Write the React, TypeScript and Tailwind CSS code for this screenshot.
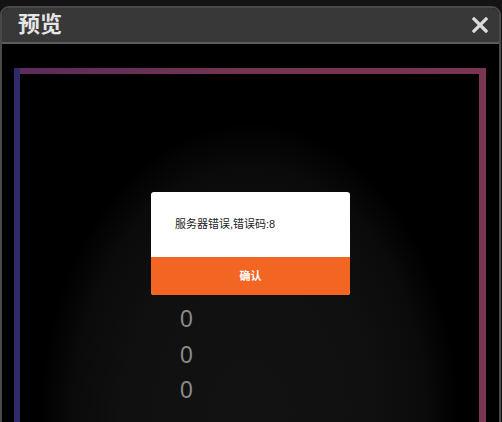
export default function App() {
  const zeros = ["0", "0", "0"];

  return (
    <div
      className="h-[422px] w-[502px] overflow-hidden bg-[#161314] pt-[6px]"
      style={{ fontFamily: '"Liberation Sans", "Noto Sans CJK SC", sans-serif' }}
    >
      {/* window */}
      <div className="flex h-[416px] w-[501px] flex-col overflow-hidden rounded-t-[9px] border-2 border-b-0 border-[#4a4a4a] bg-black">
        {/* header */}
        <div className="flex h-[36px] shrink-0 items-center justify-between border-b-2 border-[#5c5c5c] bg-[#383838] pl-[16px] pr-[10px]">
          <span className="text-[22px] font-bold leading-none text-[#e6e6e6]">预览</span>
          <svg width="16" height="16" viewBox="0 0 16 16" className="mr-[1px]">
            <path d="M2 2 L14 14 M14 2 L2 14" stroke="#dcdcdc" strokeWidth="3.2" strokeLinecap="square" />
          </svg>
        </div>

        {/* body */}
        <div className="flex-1 bg-black pl-[12px] pr-[13px] pt-[24px]">
          <div className="h-full border-l-[6px] border-[#2f2a6a] bg-[linear-gradient(to_right,#5b2c5c,#743452_45%,#7a3552_100%)] pr-[7px] pt-[6px]">
            <div className="relative h-full bg-[radial-gradient(ellipse_210px_300px_at_50%_100%,#121212_0%,#101010_60%,#0a0a0a_85%,#000_100%)] pl-[160px] pt-[228px]">
              {zeros.map((z, i) => (
                <div key={i} className="text-[23px] leading-[35.5px] text-[#8a8a8a]">
                  {z}
                </div>
              ))}

              {/* error dialog */}
              <div className="absolute left-[131px] top-[118px] w-[199px] overflow-hidden rounded-[3px] bg-white">
                <div className="h-[65px] pl-[24px] pt-[24px] text-[11px] leading-[16px] text-[#222]">
                  服务器错误,错误码:8
                </div>
                <div className="flex h-[38px] items-center justify-center bg-[#f26522] text-[11px] font-bold text-white">
                  确认
                </div>
              </div>
            </div>
          </div>
        </div>
      </div>
    </div>
  );
}
